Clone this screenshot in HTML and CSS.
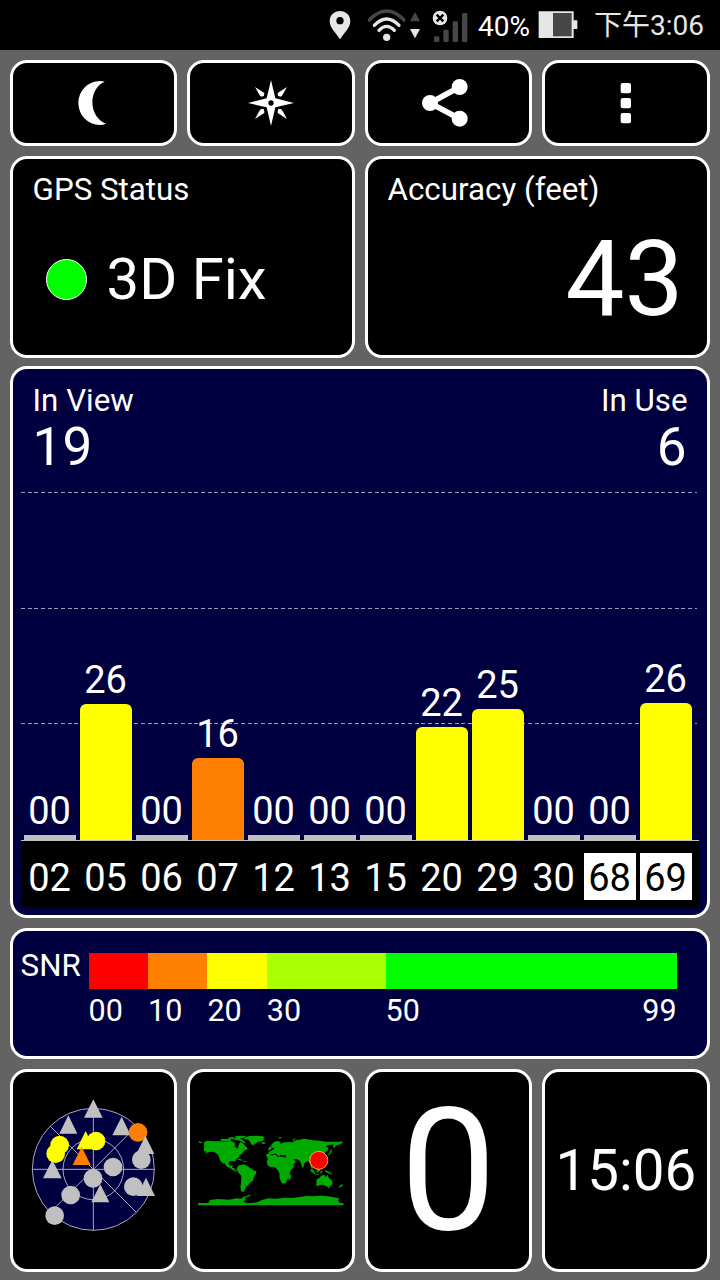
FILE: index.html
```html
<!DOCTYPE html>
<html lang="en">
<head>
    <meta charset="utf-8">
    <title>GPS Test</title>
    <link rel="stylesheet" href="styles.css">
</head>
<body>
    <div class="statusbar">
        <svg class="status-icons" width="148" height="50" viewBox="0 0 444 150">
            <path fill="#e6e6e6" fill-rule="evenodd" d="M60 33c-17 0-31 13-31 30 0 20 18 35 31 55 13-20 31-35 31-55 0-17-14-30-31-30zm0 18a11 11 0 1 1 0 22 11 11 0 0 1 0-22z"/>
            <g fill="none" stroke-width="10" stroke-linecap="round">
                <path stroke="#474747" d="M148 60q52-54 104 0"/>
                <path stroke="#e6e6e6" d="M163 76q37-38 74 0M177 91q23-24 46 0"/>
            </g>
            <circle cx="200" cy="112" r="11" fill="#e6e6e6"/>
            <path fill="#474747" d="M285 36l15 28h-30z"/>
            <path fill="#e6e6e6" d="M285 115l-15-28h30z"/>
            <g fill="#474747">
                <rect x="342" y="109" width="16" height="17" rx="4"/>
                <rect x="370" y="89" width="16" height="37" rx="4"/>
                <rect x="398" y="64" width="16" height="62" rx="4"/>
                <rect x="426" y="39" width="16" height="87" rx="4"/>
            </g>
            <circle cx="360" cy="54" r="22" fill="#e6e6e6"/>
            <path stroke="#000" stroke-width="7" d="M350 44l20 20M370 44l-20 20"/>
        </svg>
        <span class="percent">40%</span>
        <svg class="battery" width="40" height="28" viewBox="0 0 120 84">
            <path fill="#e6e6e6" d="M2 1h105v27h11v26h-11v27H2z"/>
            <path fill="#474747" d="M45 6h56v70H45z"/>
        </svg>
        <span class="clock">下午3:06</span>
    </div>

    <div class="dashboard">
        <div class="row toolbar">
            <div class="card">
                <svg width="50" height="50" viewBox="0 0 150 150">
                    <path fill="#fff" d="M110 11Q104 9 95 9A64 66 0 0 0 95 141Q106 141 114 137C92 130 73 105 73 73C73 43 90 18 110 11z"/>
                </svg>
            </div>
            <div class="card">
                <svg width="50" height="50" viewBox="0 0 150 150">
                    <path fill="#fff" d="M75 6l13 55 56 14-56 13-13 56-13-56-56-13 56-14z"/>
                    <path fill="#fff" d="M27 27l28 18-1 8-7 3-5-3zM123 27l-28 18 1 8 7 3 5-3zM27 123l28-18-1-11-9-1-5 6zM123 123l-28-18 1-11 9-1 5 6z"/>
                    <circle cx="75" cy="75" r="8"/>
                </svg>
            </div>
            <div class="card">
                <svg width="56" height="50" viewBox="-9 0 168 150">
                    <path fill="none" stroke="#fff" stroke-width="17" d="M110 27L21 75l89 47"/>
                    <g fill="#fff">
                        <circle cx="21" cy="75" r="24"/>
                        <circle cx="110" cy="27" r="24"/>
                        <circle cx="110" cy="122" r="24"/>
                    </g>
                </svg>
            </div>
            <div class="card">
                <svg width="50" height="50" viewBox="0 0 150 150">
                    <g fill="#fff">
                        <rect x="59" y="15" width="31" height="31" rx="6"/>
                        <rect x="59" y="60" width="31" height="31" rx="6"/>
                        <rect x="59" y="105" width="31" height="31" rx="6"/>
                    </g>
                </svg>
            </div>
        </div>

        <div class="row info">
            <div class="card">
                <div class="label">GPS Status</div>
                <div class="fix"><span class="dot"></span>3D Fix</div>
            </div>
            <div class="card">
                <div class="label">Accuracy (feet)</div>
                <div class="accuracy">43</div>
            </div>
        </div>

        <div class="card signal">
            <div class="counts">
                <div>
                    <div class="label">In View</div>
                    <div class="count">19</div>
                </div>
                <div class="right">
                    <div class="label">In Use</div>
                    <div class="count">6</div>
                </div>
            </div>
            <div class="chart">
                <div class="grid"><i></i><i></i><i></i></div>
                <div class="bars">
                    <div class="bar none">00<i></i></div>
                    <div class="bar yellow">26<i style="height:136px"></i></div>
                    <div class="bar none">00<i></i></div>
                    <div class="bar orange">16<i style="height:82px"></i></div>
                    <div class="bar none">00<i></i></div>
                    <div class="bar none">00<i></i></div>
                    <div class="bar none">00<i></i></div>
                    <div class="bar yellow">22<i style="height:113px"></i></div>
                    <div class="bar yellow">25<i style="height:131px"></i></div>
                    <div class="bar none">00<i></i></div>
                    <div class="bar none">00<i></i></div>
                    <div class="bar yellow">26<i style="height:137px"></i></div>
                </div>
            </div>
            <div class="ids">
                <span>02</span><span>05</span><span>06</span><span>07</span>
                <span>12</span><span>13</span><span>15</span><span>20</span>
                <span>29</span><span>30</span><span class="glonass">68</span><span class="glonass">69</span>
            </div>
        </div>

        <div class="card snr">
            <div class="snr-title">SNR</div>
            <div class="scale">
                <div class="red"><i></i>00</div>
                <div class="orange"><i></i>10</div>
                <div class="yellow"><i></i>20</div>
                <div class="lime"><i></i>30</div>
                <div class="green"><i></i><span>50</span><span>99</span></div>
            </div>
        </div>

        <div class="row bottom">
            <div class="card">
                <svg width="130" height="142" viewBox="54 27 390 426">
                    <circle cx="250" cy="238" r="183" fill="#000040"/>
                    <g fill="none" stroke="#c8c8d8" stroke-width="2.5">
                        <circle cx="250" cy="238" r="183"/>
                        <circle cx="250" cy="238" r="91"/>
                        <path d="M67 238h366M250 55v366M121 109l258 258M379 109L121 367"/>
                    </g>
                    <g fill="#c0c0c0">
                        <path d="M250 28l28 55h-56zM175 76l27 55h-54zM335 80l27 56h-55z"/>
                    </g>
                    <circle cx="384" cy="127" r="28" fill="#ff8000"/>
                    <g fill="#c0c0c0">
                        <circle cx="394" cy="209" r="28"/>
                        <path d="M406 137l27 55h-54zM127 210l28 55h-56zM271 283l27 54h-54z"/>
                        <circle cx="309" cy="231" r="28"/>
                        <circle cx="249" cy="265" r="28"/>
                        <circle cx="182" cy="315" r="28"/>
                        <circle cx="134" cy="377" r="28"/>
                        <circle cx="370" cy="290" r="28"/>
                        <path d="M408 263l27 55h-55z"/>
                    </g>
                    <g fill="#ff0">
                        <circle cx="149" cy="165" r="28"/>
                        <circle cx="137" cy="191" r="28"/>
                        <path d="M227 123l27 55h-54z"/>
                        <circle cx="258" cy="153" r="28"/>
                    </g>
                    <path fill="#ff8000" d="M215 170l27 55h-54z"/>
                </svg>
            </div>
            <div class="card">
                <svg width="150" height="80" viewBox="17.6 30 450 240">
                    <g fill="#00aa00">
                        <!-- americas -->
                        <path d="M24 63l8 2 6 4-10 0zM42 66l10-4 18 2 25 0 14 1 14-2 10 5 3 5-3 5 6 7 5 0 1-8 4-10 9 1 7 9 5 4 3 7-9 3-6 5-1 5-9 4-3 7-8 7-2 8-4-4-10 0-5 3 0 7 5 5 6-4 1 5-3 4 7 1 2 6 7 2-3 3-9-4-10-7-10-5-7-11-3 1 3 7-6-8-7-8-3-12-5-6-7-5-10-2-10 2-8 4 2-6-8-3 2-5z"/>
                        <path d="M88 60l8-4 12 2 8-3 8 3-3 5-14 1-10-1zM112 54l12-3 12 3 14 1 8 5 8 8-5 1-8-6-12-2-10-3zM135 49l18-2 16 1-8 5-12 2-13-2zM140 118l8-2 10 5-3 1zM160 123l8 0-1 3-7-1z"/>
                        <path d="M162 53l16-5 22-1 18 2 6 3-5 4 4 1-6 6-12 2-8 5-8 6-6-3-3-8-6-6-12-2zM214 68l8-2 5 3-5 3-7-1z"/>
                        <path d="M151 136l9-3 11 4 9 7 9 6 10 4-1 7-6 8-4 13-9 6-5 8-7 5-2 7-5 6 4 2-4 0-7-2-2-13 2-16 1-17-8-8-6-11 2-9 5-4z"/>
                        <!-- europe and asia -->
                        <path d="M236 82l5-3 4 7-6 5-7 0 4-4zM243 75l5-6 8-5 8-1 8 4-3 5 7-3 8-2 14-1 6 1 10-4 7-4 8 0 12-3 20 3 6 2 22 1 18 3 20 0 20 0 10-1 0 5-7 4-12 3-6 8-4-4 3-7-8 1-11 1-5 6 6 1 1 8-9 8-4 0 1 7-4 1-4-7-8 3 5 7 0 9-8 7-10 4 6 7-4 7-7-5-1 8 6 8-4-1-7-11-2-11-6-8-6 1-7 8 0 8-4 3-7-20-9-5-12-1 8 8-5 7-12 5-5-8-9-14 2-9-12 0-6-2-3 6-6-6-9-5 3 8-6-5-7 1-5 8-8 0-1-9 8 0-1-6 8-4 8-4 0-5-7 1z"/>
                        <path d="M264 54l7-3 4 2-6 3zM308 59l11-5-6 7-3 3zM419 98l2-8 3-3 1 8-5 8-8 4 2-4z"/>
                        <!-- africa -->
                        <path d="M232 110l10-4 16-1 4 5 10 0 14 2 6 12 7 12 13-1-3 8-9 11-2 15-6 9-5 10-10 3-5-7-4-12 0-12-7-12-8-7-12 0-9-6-2-10 3-8zM298 166l5-3-1 10-4 8-4-3z"/>
                        <!-- oceania -->
                        <path d="M360 146l7 4 8 9-2 3-11-8zM375 162l13 2-1 2-12-2zM380 149l7-4 3 6-5 6-6-3zM391 153l6 1-2 6-4 1zM402 151l8 1 12 6 5 6-8-3-12-5zM380 178l8-5 7-7 10 0 2 6 5-8 4 9 9 8 3 9-5 8-9 3-8-4-5-3-8 0-11 4-4-3zM413 201l6 0-3 5zM452 195l5-3 1 5-6 3-6 4 0-3z"/>
                        <!-- antarctica -->
                        <path d="M24 249h30l6-9 22-3 34 2 24-4 12 1 8-5 20-7 2 3-18 7 3 6-8 5 14 5 28-3 14-7 20-5 22 1 28-3 22 1 20-3 24-3 20 1 20-2 22 2 20 3 16 4-6 6 4 4 1 3H460v7H24z"/>
                    </g>
                    <circle cx="386" cy="121" r="27" fill="red" stroke="#ffb030" stroke-width="3"/>
                </svg>
            </div>
            <div class="card speed">0</div>
            <div class="card time">15:06</div>
        </div>
    </div>
</body>
</html>
```
FILE: styles.css
```css
* {box-sizing:border-box;}
body {margin:0; width:720px; height:1280px; background-color:#636363; color:white; font-family:Roboto, sans-serif; overflow:hidden;}
svg {display:block;}

.statusbar {height:50px; background-color:black; display:flex; align-items:center; padding-left:320px;}
.percent {width:71px; margin-left:10px; font-size:28px; line-height:50px; padding-top:3px;}
.battery {margin-right:16px; margin-left:-11px;}
.clock {font-family:Roboto, "Noto Sans CJK TC", sans-serif; font-size:28px; line-height:50px; padding-top:2px; color:#e6e6e6; white-space:nowrap;}

.dashboard {display:flex; flex-direction:column; gap:9.7px; padding:9.5px 10.4px 0 9.6px;}
.card {background-color:black; border:3px solid white; border-radius:17px;}
.row {display:grid; column-gap:9.9px; grid-template-columns:repeat(4, 1fr);}
.label {font-size:31.3px; line-height:38px;}

.toolbar {height:86.5px;}
.toolbar .card, .bottom .card {display:flex; align-items:center; justify-content:center;}

.info {height:201px; grid-template-columns:1fr 1fr;}
.info .card {padding:12.5px 20px;}
.fix {display:flex; align-items:center; gap:20px; padding-left:13px; margin-top:36px; font-size:58px; line-height:68px;}
.dot {width:41px; height:41px; border-radius:50%; background-color:#00ff00; border:1px solid white;}
.accuracy {font-size:105px; line-height:124px; margin-top:9px; padding-right:3px; text-align:right;}

.signal {height:552px; background-color:#000040; padding:13px 8px 0;}
.counts {display:flex; justify-content:space-between; padding:0 12px 0 12px;}
.count {font-size:53px; line-height:54px;}
.right {text-align:right;}
.right .label {margin-right:-1px;}
.chart {display:grid; height:367px;}
.grid, .bars {grid-area:1 / 1;}
.grid {display:flex; flex-direction:column; gap:114.7px; padding-top:17.5px; margin-right:2px;}
.grid i {height:1px; background:repeating-linear-gradient(90deg, #9c9cc0 0 4px, transparent 4px 6.67px);}
.bars {display:flex; align-items:flex-end; gap:4px; padding-left:3px; border-bottom:1px solid #c0c0c0;}
.bar {width:52px; font-size:38px; line-height:44px; text-align:center;}
.bar i {display:block; height:5px; border-radius:6px 6px 0 0; margin-top:2px;}
.bar.none i {background-color:#c0c0c0; border-radius:0;}
.yellow i {background-color:#ffff00;}
.orange i {background-color:#ff8000;}
.ids {display:flex; gap:4px; height:66px; padding:12px 3px 7px; background-color:black; font-size:38px; line-height:51px; text-align:center;}
.ids span {width:52px; flex:none;}
.ids .glonass {background-color:white; color:black;}

.snr {height:130.5px; background-color:#000040; display:flex; padding:22px 30px 0 8px; font-size:30.5px;}
.snr-title {width:68px; font-size:31.3px; line-height:26px;}
.scale {flex:1; display:grid; grid-template-columns:10fr 10fr 10fr 20fr 49fr; line-height:43px;}
.scale i {display:block; height:36px; width:100%;}
.red i {background-color:#ff0000;}
.lime i {background-color:#aaff00;}
.green {display:flex; flex-wrap:wrap; justify-content:space-between; align-content:flex-start;}
.green i {background-color:#00ff00;}

.bottom {height:201px; margin-top:0.3px;}
.speed {font-size:171px; line-height:196px; padding-top:1px;}
.time {font-size:56.5px; padding-top:1px;}
```
